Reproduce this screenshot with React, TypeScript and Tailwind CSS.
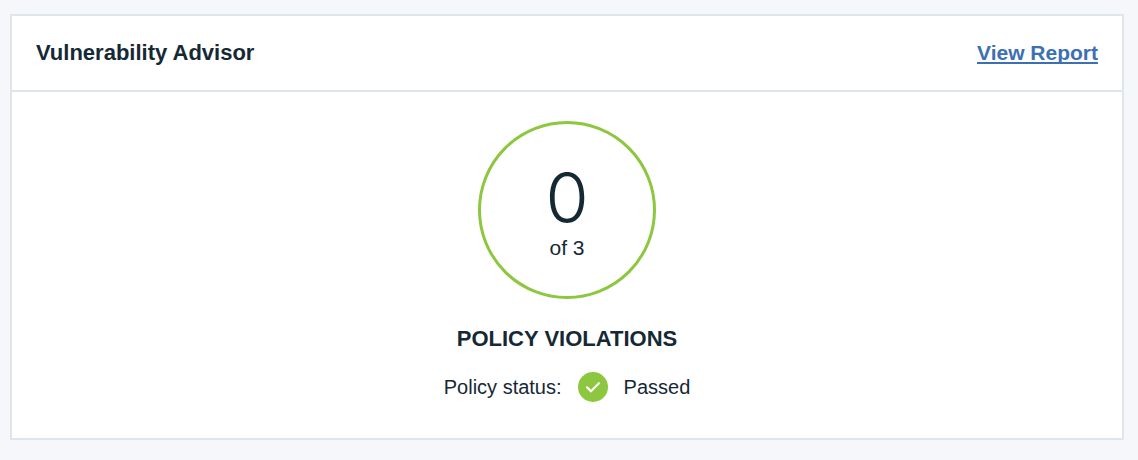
export default function App() {
  return (
    <main className="min-h-screen bg-[#f5f7fa] pt-3.5 pr-3.5 pb-5 pl-2.5 font-['Liberation_Sans',Arial,sans-serif] text-[#152935]">
      <section className="border-2 border-[#dfe6eb] bg-white">
        <header className="flex items-center justify-between border-b-2 border-[#dfe6eb] px-6 py-[23px]">
          <h1 className="text-[22px] leading-7 font-bold">Vulnerability Advisor</h1>
          <a
            href="#report"
            className="text-[21px] leading-7 font-bold text-[#3d70b2] underline decoration-2 underline-offset-2 [text-decoration-skip-ink:none]"
          >
            View Report
          </a>
        </header>
        <div className="flex flex-col items-center pt-[29px] pb-[35px]">
          <div className="flex size-[178px] flex-col items-center rounded-full border-[3px] border-[#8dc63f] pt-[38px]">
            <span className="font-['Inter','Liberation_Sans',sans-serif] text-[70px] leading-[72px] font-light">0</span>
            <span className="text-[21px] leading-7">of 3</span>
          </div>
          <h2 className="mt-[26px] text-[22px] leading-7 font-bold">POLICY VIOLATIONS</h2>
          <div className="mt-[18px] flex items-center gap-4 text-[20px] leading-8">
            <span>Policy status:</span>
            <svg className="size-[30px]" viewBox="0 0 30 30" aria-hidden="true">
              <circle cx="15" cy="15" r="15" fill="#8dc63f" />
              <path d="M9 15.3 L12.9 19.2 L21 11.2" fill="none" stroke="white" strokeWidth="2.2" strokeLinecap="round" />
            </svg>
            <span>Passed</span>
          </div>
        </div>
      </section>
    </main>
  );
}
